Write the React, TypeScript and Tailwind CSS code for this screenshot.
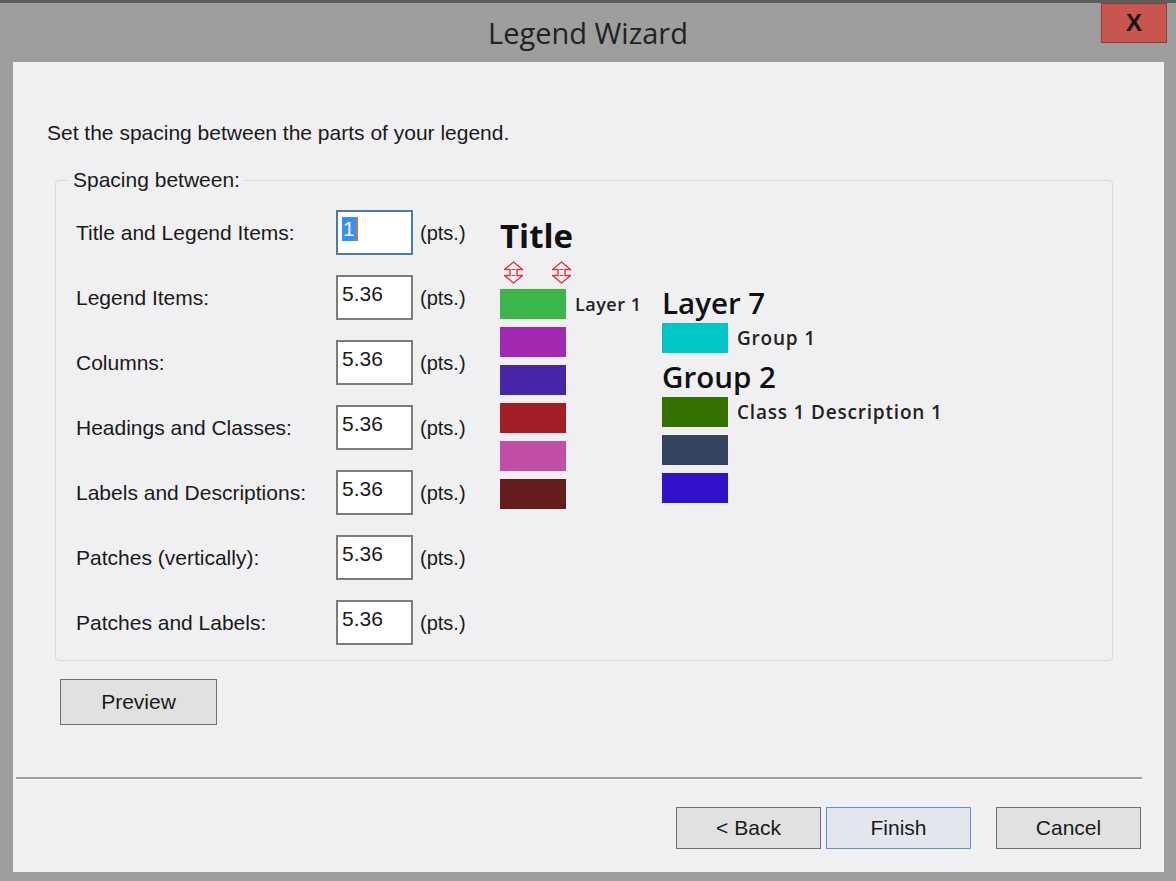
import React from "react";

const rows = [
  { label: "Title and Legend Items:", value: "1", focused: true },
  { label: "Legend Items:", value: "5.36" },
  { label: "Columns:", value: "5.36" },
  { label: "Headings and Classes:", value: "5.36" },
  { label: "Labels and Descriptions:", value: "5.36" },
  { label: "Patches (vertically):", value: "5.36" },
  { label: "Patches and Labels:", value: "5.36" },
];

const layerPatches = ["#3cb54a", "#a02bb0", "#4626a6", "#a31f28", "#c24fa6", "#651c1c"];

const ui = { fontFamily: '"Liberation Sans", Arial, sans-serif' };
const seg = { fontFamily: '"Open Sans", "Noto Sans", sans-serif' };

const Arrow = () => (
  <svg width="21" height="23" viewBox="0 0 21 23">
    <path
      d="M10.5 1 L19.5 8.5 L14 8.5 L14 14.5 L19.5 14.5 L10.5 22 L1.5 14.5 L7 14.5 L7 8.5 L1.5 8.5 Z"
      fill="#fff4f4"
      stroke="#e2343c"
      strokeWidth="1.4"
      strokeLinejoin="round"
    />
    <path d="M8.5 8.5 L12.5 8.5 M8.5 14.5 L12.5 14.5" stroke="#e2343c" strokeWidth="1.2" />
  </svg>
);

const Patch = ({ color }: { color: string }) => (
  <div className="h-[30px] w-[66px] shrink-0" style={{ backgroundColor: color }} />
);

const Button = ({ label, primary, className = "" }: { label: string; primary?: boolean; className?: string }) => (
  <div
    className={`flex items-center justify-center border text-[21px] text-[#1a1a1a] ${
      primary ? "border-[#5a94cc] bg-[#e3e7ed]" : "border-[#707070] bg-[#e1e1e1]"
    } ${className}`}
    style={ui}
  >
    {label}
  </div>
);

export default function App() {
  return (
    <div className="flex h-[881px] w-[1176px] flex-col overflow-hidden bg-[#9e9e9e]">
      {/* title bar */}
      <div className="h-[3px] bg-[#5c5c5c]" />
      <div className="relative flex h-[59px] items-start justify-center">
        <span className="mt-[12px] text-[29px] leading-[36px] text-[#222]" style={seg}>
          Legend Wizard
        </span>
        <div className="absolute right-[9px] top-0 flex h-[40px] w-[66px] items-center justify-center border border-[#8e3b38] bg-[#c8564e]">
          <span className="text-[24px] font-bold leading-none text-[#111]" style={ui}>
            X
          </span>
        </div>
      </div>

      {/* client area */}
      <div className="ml-[13px] mr-[12px] flex h-[810px] flex-col bg-[#f0eff2]" style={ui}>
        <div className="ml-[34px] mt-[59px] text-[21px] leading-[24px] text-[#1a1a1a]">
          Set the spacing between the parts of your legend.
        </div>

        {/* group box */}
        <div className="relative ml-[42px] mt-[35px] h-[481px] w-[1058px] rounded-[4px] border border-[#d9d9db]">
          <span className="absolute left-[13px] top-[-13px] bg-[#f0eff2] px-[4px] text-[21px] leading-[24px] text-[#1a1a1a]">
            Spacing between:
          </span>
          <div className="flex pl-[20px] pt-[29px]">
            <div className="flex w-[424px] flex-col gap-[20px]">
              {rows.map((r) => (
                <div key={r.label} className="flex h-[45px] items-center">
                  <span className="w-[260px] text-[21px] text-[#1a1a1a]">{r.label}</span>
                  <div
                    className={`flex h-[45px] w-[77px] items-start bg-white pl-[4px] pt-[5px] text-[21px] leading-[24px] ${
                      r.focused ? "border-2 border-[#4a7aa6]" : "border-2 border-[#7c7c7c]"
                    }`}
                  >
                    {r.focused ? (
                      <span className="flex bg-[#3390ff] pl-[1px] text-white">
                        {r.value}
                        <span className="ml-[1px] w-[2px] bg-[#e07020]" />
                      </span>
                    ) : (
                      <span className="text-[#1a1a1a]">{r.value}</span>
                    )}
                  </div>
                  <span className="ml-[7px] text-[20px] text-[#1a1a1a]">(pts.)</span>
                </div>
              ))}
            </div>

            {/* legend preview */}
            <div className="flex" style={seg}>
              <div className="flex w-[162px] flex-col">
                <div className="mt-[9px] text-[33px] font-bold leading-[34px] text-[#111]">Title</div>
                <div className="ml-[3px] mt-[8px] flex gap-[27px]">
                  <Arrow />
                  <Arrow />
                </div>
                <div className="mt-[5px] flex flex-col gap-[8px]">
                  {layerPatches.map((c, i) => (
                    <div key={c} className="flex items-center">
                      <Patch color={c} />
                      {i === 0 && (
                        <span className="ml-[9px] text-[18px] font-semibold leading-none tracking-[0.5px] text-[#222]">
                          Layer 1
                        </span>
                      )}
                    </div>
                  ))}
                </div>
              </div>
              <div className="flex flex-col">
                <div className="mt-[77px] text-[29.5px] font-semibold leading-[31px] text-[#111]">Layer 7</div>
                <div className="mt-[5px] flex items-center">
                  <Patch color="#00c6c8" />
                  <span className="ml-[9px] text-[19px] font-semibold leading-none tracking-[0.8px] text-[#222]">
                    Group 1
                  </span>
                </div>
                <div className="mt-[8px] text-[29.5px] font-semibold leading-[31px] text-[#111]">Group 2</div>
                <div className="mt-[5px] flex flex-col gap-[8px]">
                  <div className="flex items-center">
                    <Patch color="#347200" />
                    <span className="ml-[9px] text-[19px] font-semibold leading-none tracking-[0.8px] text-[#222]">
                      Class 1 Description 1
                    </span>
                  </div>
                  <Patch color="#34435e" />
                  <Patch color="#3412cc" />
                </div>
              </div>
            </div>
          </div>
        </div>

        <Button label="Preview" className="ml-[47px] mt-[18px] h-[46px] w-[157px]" />

        {/* separator */}
        <div className="ml-[3px] mt-[52px] w-[1126px] border-t-2 border-b border-t-[#a0a0a0] border-b-white" />

        <div className="mr-[23px] mt-[27px] flex justify-end">
          <Button label="< Back" className="h-[42px] w-[145px]" />
          <Button label="Finish" primary className="ml-[5px] h-[42px] w-[145px]" />
          <Button label="Cancel" className="ml-[25px] h-[42px] w-[145px]" />
        </div>
      </div>
    </div>
  );
}
